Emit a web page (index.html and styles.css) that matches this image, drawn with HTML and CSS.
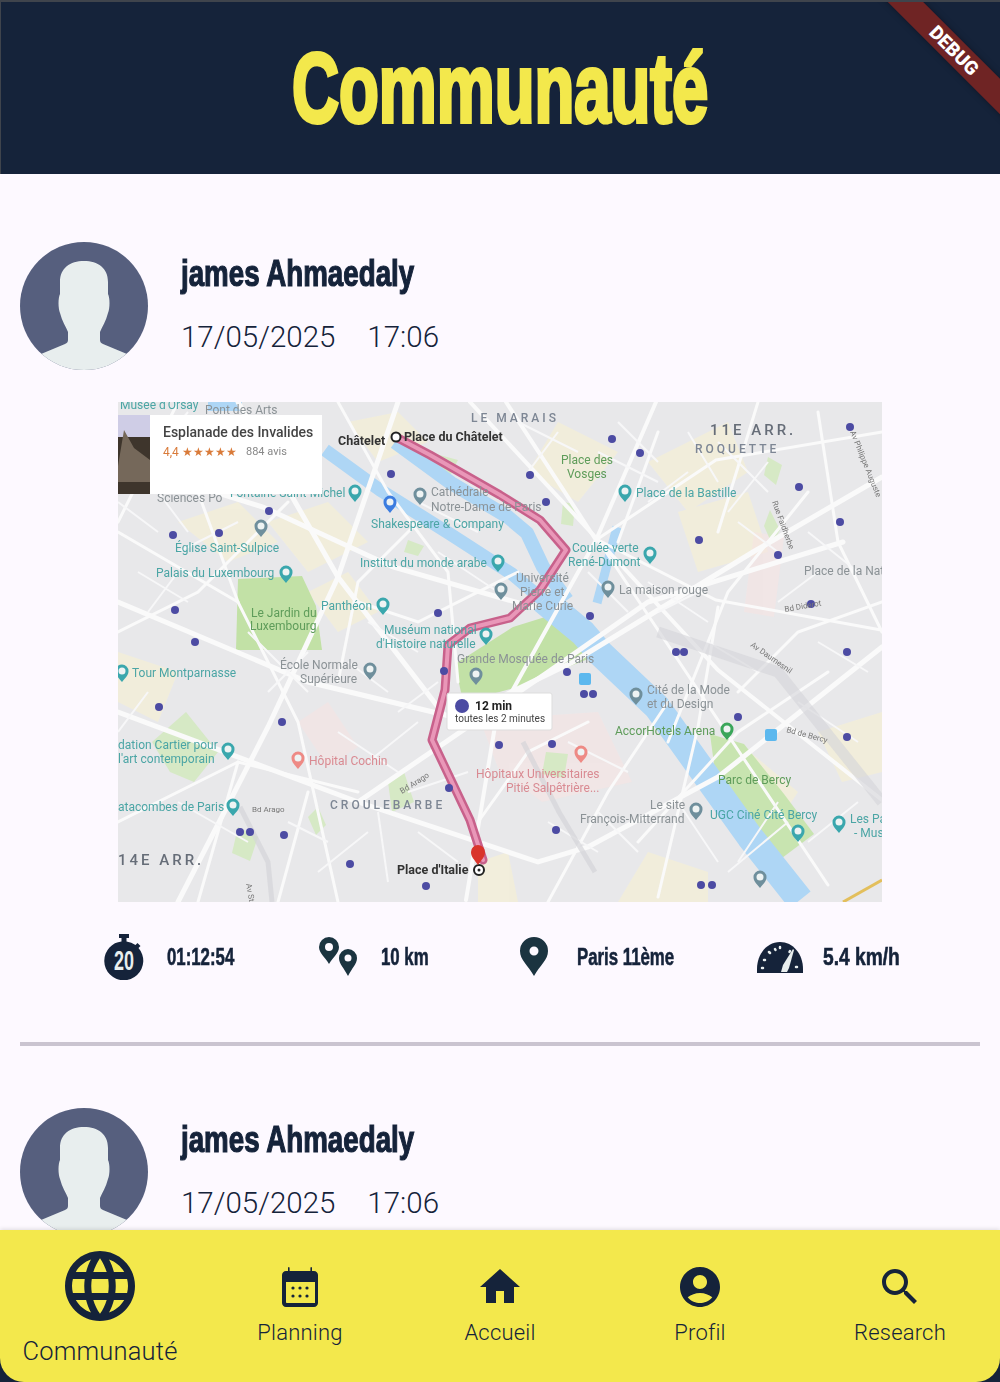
FILE: index.html
```html
<!DOCTYPE html>
<html lang="fr">
<head>
    <meta charset="UTF-8">
    <meta name="viewport" content="width=device-width, initial-scale=1.0">
    <title>Communauté</title>
    <link rel="stylesheet" href="styles.css">
</head>
<body>
    <svg class="defs">
        <defs>
            <g id="mapPin">
                <path d="M0 10c-4-5-6.500-7-6.500-11a6.500 6.500 0 0 1 13 0c0 4-2.500 6-6.500 11z"/>
                <circle cy="-1" r="3.500" fill="#eef3f3"/>
            </g>
            <symbol id="avatar" viewBox="0 0 128 128">
                <rect width="128" height="128" fill="#565f7e"/>
                <path fill="#e8eeee" d="M64 19C50 19 40 26 40 40v12c-2 4-2 14 0 19 2 8 6 14 8 19v8c0 2-1 3-3 4l-24 10-6 16h98l-6-16-24-10c-2-1-3-2-3-4v-8c2-5 6-11 8-19 2-5 2-15 0-19V40c0-14-10-21-24-21z"/>
            </symbol>
        </defs>
    </svg>

    <div class="screen">
        <header class="app-bar">
            <h1>Communauté</h1>
            <div class="debug-banner">DEBUG</div>
        </header>

        <main class="feed">
            <article class="post">
                <div class="post-head">
                    <svg class="avatar"><use href="#avatar"/></svg>
                    <div class="post-meta">
                        <div class="post-name">james Ahmaedaly</div>
                        <div class="post-date"><span>17/05/2025</span><span>17:06</span></div>
                    </div>
                </div>

                <svg class="map" viewBox="0 0 764 500">
                    <rect width="764" height="500" fill="#e8e8ea"/>

                    <!-- quartiers plus clairs -->
                    <g class="map-blocks" fill="#f8f1d2">
                        <path d="M60 120l60-20 40 40-50 20z"/>
                        <path d="M150 120l60-20 40 40-60 30z"/>
                        <path d="M230 20l50-10 30 30-50 20z"/>
                        <path d="M440 20l60 30-40 50-50-30z"/>
                        <path d="M530 60l80-40 20 50-60 40z"/>
                        <path d="M560 110l70-20 20 60-70 20z"/>
                        <path d="M0 250l60 20-20 50-40-20z"/>
                        <path d="M230 170l30 40-40 20-30-40z"/>
                        <path d="M620 340l60 50-20 30-60-40z"/>
                        <path d="M530 450l60 20v30h-90z"/>
                        <path d="M700 330l64-20v60l-40 10z"/>
                        <path d="M360 460l30-10 10 50h-40z"/>
                    </g>
                    <g class="map-blocks" fill="#f6e4e3">
                        <path d="M362 318l118-8 34 70-90 20-44-34z"/>
                        <path d="M180 320l30-20 30 45-30 20z"/>
                        <path d="M636 130l30 5-10 80-30-5z"/>
                    </g>

                    <!-- parcs -->
                    <path fill="#c2e1a6" d="M120 177l64-3 14 30 6 44H118z"/>
                    <path fill="#c2e1a6" d="M337 262l58-37 45-14 35 44-75 30-55 15z"/>
                    <path fill="#c8e4b0" d="M592 332l34 10 40 50 30 40-40 30-30-30-26-40z"/>
                    <g fill="#d6e9c5">
                        <path d="M34 340l34-30 32 40-24 30-24-10z"/>
                        <path d="M318 52l22 6-8 16-20-6z"/>
                        <path d="M290 138l16 6-6 10-14-4z"/>
                        <path d="M428 350l22 2-4 24-22-4z"/>
                        <path d="M652 108l10 20-8 14-8-18z"/>
                        <path d="M445 100l12 2-2 22-12-2z"/>
                        <path d="M650 55l14 8-6 20-12-10z"/>
                        <path d="M270 380l16-10 10 30-22 10z"/>
                        <path d="M120 425l20 10-8 24-18-8z"/>
                        <path d="M200 405l8 18-10 10-8-18z"/>
                    </g>

                    <!-- Seine et canal -->
                    <g fill="none" stroke="#aed6f5" stroke-linejoin="round">
                        <path stroke-width="18" d="M90 0h34"/>
                        <path stroke-width="13" d="M207 48l55 40 70 44 62 40 31 26"/>
                        <path stroke-width="14" d="M277 40l56 41 57 34 19 16 16 34 24 33"/>
                        <path stroke-width="27" d="M425 198l40 33 17 20 57 54 50 70 43 60 50 63"/>
                        <path stroke-width="9" d="M499 125l-20 76"/>
                    </g>

                    <!-- routes -->
                    <g fill="none" stroke="#fafafa" stroke-width="3" stroke-linecap="round">
                        <path stroke-width="5" d="M0 60l145 45 130 60 140 40"/>
                        <path stroke-width="5" d="M280 0l-60 175-70 150-90 175"/>
                        <path stroke-width="5" d="M0 200l190 80 150 36 115-56 180-110 129-75"/>
                        <path stroke-width="5" d="M240 400l190-130 100-70 195-60"/>
                        <path stroke-width="5" d="M120 0l100 175 100 130"/>
                        <path stroke-width="5" d="M0 310l240 90 180 60 50-15 130-70 164-130"/>
                        <path stroke-width="4" d="M478 138l-90-138"/>
                        <path stroke-width="4" d="M352 0l128 138 120 130 164 130"/>
                        <path stroke-width="4" d="M478 138l60-138"/>
                        <path stroke-width="4" d="M478 138l-50 90-50 90-30 180"/>
                        <path d="M478 138l120-80 166-28"/>
                        <path d="M480 138l118 60 165 30"/>
                        <path d="M480 138l110 165 120 180"/>
                        <path d="M600 205l-20 120-40 170"/>
                        <path d="M690 90l-80 100-60 150"/>
                        <path d="M60 0L0 120"/>
                        <path d="M0 130l120 70 60 120 40 180"/>
                        <path d="M220 0l50 90 60 80 10 110"/>
                        <path d="M170 100l-90 90-80 40"/>
                        <path d="M80 90l40 110"/>
                        <path d="M300 120l-60 60-20 100"/>
                        <path d="M0 420l120-60 120 30"/>
                        <path d="M80 500l40-140"/>
                        <path d="M160 500l30-110"/>
                        <path d="M400 170l-100 50-60-20"/>
                        <path d="M540 30l-40 110"/>
                        <path d="M640 0l-40 130"/>
                        <path d="M700 10l20 130 44 90"/>
                        <path d="M620 290l60-60 84-30"/>
                        <path d="M520 440l100-110 90-60"/>
                        <path d="M430 500l60-110 60-90"/>
                        <path d="M360 420l50-70 60-30"/>
                    </g>
                    <g fill="none" stroke="#f7f7f8" stroke-width="2">
                        <path d="M20 20l80 70M70 10L20 70M160 20l40 70M300 100l60 30M320 150l60 40M130 230l60 60M190 250l-40 40M30 290L0 330M60 400l70 40M220 330l60 40M290 390l60-20M530 180l60 40M600 40l50 50M650 60l-40 50M680 300l60 40M700 240l50 30M560 400l40 60M660 400l-40 60M60 150l60-30M480 50l60 30M530 100l40-30M260 410l10 70M430 420l50 30"/>
                        <path d="M100 20l30 50M130 60l50-30M40 90l30 40M0 100l40 30M20 170l50 30M60 170l-30 40M230 260l40 30M250 220l50 30M280 310l40-30M170 420l40 20M200 470l50-40M250 360l50-40M300 430l40 30M480 410l40 40M450 340l60 30M500 20l40 40M570 30l30 50M620 120l40 30M540 210l40-20M590 240l50 30M690 130l50 40M700 170l-40 30M690 440l50-40M610 470l60-50M470 170l40 40M400 20l60 30M440 30l-30 40"/>
                    </g>
                    <path fill="none" stroke="#d4d4d9" stroke-width="11" opacity=".6" d="M540 230l120 40 104 130"/>
                    <path fill="none" stroke="#d4d4d9" stroke-width="5" opacity=".7" d="M405 340l36 70 36 60M122 405l28 55 4 40"/>
                    <path fill="none" stroke="#e3bf5c" stroke-width="3" d="M725 500l39-22"/>

                    <!-- itinéraire -->
                    <g fill="none" stroke-linejoin="round" stroke-linecap="round">
                        <path stroke="#c8618b" stroke-width="9" d="M278 35l34 18 70 40 40 25 26 30-26 40-30 28-40 10-22 17-3 45-13 50 38 80 13 40"/>
                        <path stroke="#e997b8" stroke-width="4" d="M278 35l34 18 70 40 40 25 26 30-26 40-30 28-40 10-22 17-3 45-13 50 38 80 13 40"/>
                    </g>

                    <!-- arrêts de métro -->
                    <g fill="#4c4ba3">
                        <circle cx="273" cy="72" r="4"/><circle cx="151" cy="109" r="4"/><circle cx="55" cy="133" r="4"/><circle cx="101" cy="131" r="4"/>
                        <circle cx="57" cy="208" r="4"/><circle cx="77" cy="240" r="4"/><circle cx="320" cy="211" r="4"/>
                        <circle cx="494" cy="37" r="4"/><circle cx="522" cy="51" r="4"/><circle cx="412" cy="73" r="4"/><circle cx="732" cy="25" r="4"/>
                        <circle cx="681" cy="85" r="4"/><circle cx="722" cy="120" r="4"/><circle cx="581" cy="138" r="4"/><circle cx="660" cy="153" r="4"/>
                        <circle cx="693" cy="202" r="4"/><circle cx="428" cy="100" r="4"/><circle cx="472" cy="214" r="4"/><circle cx="729" cy="250" r="4"/>
                        <circle cx="41" cy="305" r="4"/><circle cx="164" cy="320" r="4"/><circle cx="326" cy="269" r="4"/><circle cx="449" cy="270" r="4"/>
                        <circle cx="620" cy="315" r="4"/><circle cx="729" cy="335" r="4"/><circle cx="331" cy="386" r="4"/>
                        <circle cx="166" cy="433" r="4"/><circle cx="232" cy="462" r="4"/><circle cx="308" cy="484" r="4"/><circle cx="438" cy="428" r="4"/>
                        <circle cx="434" cy="342" r="4"/><circle cx="381" cy="343" r="4"/><circle cx="558" cy="250" r="4"/><circle cx="566" cy="250" r="4"/>
                        <circle cx="466" cy="292" r="4"/><circle cx="475" cy="292" r="4"/><circle cx="594" cy="483" r="4"/><circle cx="583" cy="483" r="4"/>
                        <circle cx="122" cy="430" r="4"/><circle cx="132" cy="430" r="4"/>
                    </g>

                    <!-- épingles -->
                    <g fill="#3aa7ad">
                        <use href="#mapPin" x="237" y="90"/>
                        <use href="#mapPin" x="507" y="90"/>
                        <use href="#mapPin" x="532" y="152"/>
                        <use href="#mapPin" x="380" y="160"/>
                        <use href="#mapPin" x="168" y="171"/>
                        <use href="#mapPin" x="265" y="203"/>
                        <use href="#mapPin" x="368" y="233"/>
                        <use href="#mapPin" x="4" y="270"/>
                        <use href="#mapPin" x="110" y="348"/>
                        <use href="#mapPin" x="115" y="404"/>
                        <use href="#mapPin" x="680" y="430"/>
                        <use href="#mapPin" x="721" y="421"/>
                    </g>
                    <g fill="#6f8f9c">
                        <use href="#mapPin" x="143" y="125"/>
                        <use href="#mapPin" x="302" y="93"/>
                        <use href="#mapPin" x="252" y="268"/>
                        <use href="#mapPin" x="358" y="273"/>
                        <use href="#mapPin" x="383" y="188"/>
                        <use href="#mapPin" x="490" y="186"/>
                        <use href="#mapPin" x="518" y="293"/>
                        <use href="#mapPin" x="578" y="408"/>
                        <use href="#mapPin" x="642" y="476"/>
                    </g>
                    <use href="#mapPin" x="272" y="101" fill="#3c7de0"/>
                    <use href="#mapPin" x="180" y="357" fill="#ee8a85"/>
                    <use href="#mapPin" x="463" y="351" fill="#ee8a85"/>
                    <use href="#mapPin" x="609" y="328" fill="#3aa65a"/>
                    <rect x="461" y="271" width="12" height="12" rx="2" fill="#5cb8ee"/>
                    <rect x="647" y="327" width="12" height="12" rx="2" fill="#5cb8ee"/>

                    <!-- libellés -->
                    <g class="lbl-teal">
                        <text x="2" y="7">Musée d'Orsay</text>
                        <text x="112" y="95">Fontaine Saint-Michel</text>
                        <text x="253" y="126">Shakespeare &amp; Company</text>
                        <text x="242" y="165">Institut du monde arabe</text>
                        <text x="57" y="150">Église Saint-Sulpice</text>
                        <text x="38" y="175">Palais du Luxembourg</text>
                        <text x="203" y="208">Panthéon</text>
                        <text x="14" y="275">Tour Montparnasse</text>
                        <text x="266" y="232">Muséum national</text>
                        <text x="258" y="246">d'Histoire naturelle</text>
                        <text x="0" y="347">dation Cartier pour</text>
                        <text x="0" y="361">l'art contemporain</text>
                        <text x="0" y="409">atacombes de Paris</text>
                        <text x="518" y="95">Place de la Bastille</text>
                        <text x="454" y="150">Coulée verte</text>
                        <text x="450" y="164">René-Dumont</text>
                        <text x="592" y="417">UGC Ciné Cité Bercy</text>
                        <text x="732" y="421">Les Pa</text>
                        <text x="736" y="435">- Muse</text>
                    </g>
                    <g class="lbl-grey">
                        <text x="87" y="12">Pont des Arts</text>
                        <text x="39" y="100">Sciences Po</text>
                        <text x="313" y="94">Cathédrale</text>
                        <text x="313" y="109">Notre-Dame de Paris</text>
                        <text x="398" y="180">Université</text>
                        <text x="402" y="194">Pierre et</text>
                        <text x="394" y="208">Marie Curie</text>
                        <text x="501" y="192">La maison rouge</text>
                        <text x="686" y="173">Place de la Nat</text>
                        <text x="162" y="267">École Normale</text>
                        <text x="182" y="281">Supérieure</text>
                        <text x="339" y="261">Grande Mosquée de Paris</text>
                        <text x="529" y="292">Cité de la Mode</text>
                        <text x="529" y="306">et du Design</text>
                        <text x="532" y="407">Le site</text>
                        <text x="462" y="421">François-Mitterrand</text>
                    </g>
                    <g class="lbl-green">
                        <text x="443" y="62">Place des</text>
                        <text x="449" y="76">Vosges</text>
                        <text x="133" y="215">Le Jardin du</text>
                        <text x="132" y="228">Luxembourg</text>
                        <text x="497" y="333">AccorHotels Arena</text>
                        <text x="600" y="382">Parc de Bercy</text>
                    </g>
                    <g class="lbl-red">
                        <text x="191" y="363">Hôpital Cochin</text>
                        <text x="358" y="376">Hôpitaux Universitaires</text>
                        <text x="388" y="390">Pitié Salpêtrière...</text>
                    </g>
                    <g class="lbl-quarter">
                        <text x="353" y="20">LE MARAIS</text>
                        <text x="592" y="33" class="lbl-arr">11E ARR.</text>
                        <text x="577" y="51">ROQUETTE</text>
                        <text x="212" y="407">CROULEBARBE</text>
                        <text x="0" y="463" class="lbl-arr">14E ARR.</text>
                    </g>
                    <g class="lbl-street">
                        <text x="134" y="410">Bd Arago</text>
                        <text transform="translate(284 392) rotate(-32)">Bd Arago</text>
                        <text transform="translate(667 210) rotate(-10)">Bd Diderot</text>
                        <text transform="translate(632 244) rotate(35)">Av Daumesnil</text>
                        <text transform="translate(668 330) rotate(15)">Bd de Bercy</text>
                        <text transform="translate(654 100) rotate(70)">Rue Faidherbe</text>
                        <text transform="translate(732 30) rotate(68)">Av Philippe Auguste</text>
                        <text transform="translate(128 482) rotate(80)">Av Stephen</text>
                    </g>
                    <g class="lbl-dark">
                        <text x="220" y="43">Châtelet</text>
                        <text x="286" y="39">Place du Châtelet</text>
                        <text x="279" y="472">Place d'Italie</text>
                    </g>

                    <circle cx="278" cy="35" r="4.500" fill="#fff" stroke="#222" stroke-width="2"/>
                    <circle cx="361" cy="468" r="5" fill="#fff" stroke="#222" stroke-width="2"/>
                    <circle cx="361" cy="468" r="1.500" fill="#222"/>
                    <path fill="#d9342b" d="M360 463c-4-6-7-8-7-13a7 7 0 0 1 14 0c0 5-3 7-7 13z"/>

                    <!-- encarts -->
                    <rect x="32" y="13" width="172" height="79" fill="#fff"/>
                    <rect y="13" width="32" height="79" fill="#3e352c"/>
                    <rect y="13" width="32" height="22" fill="#cfcde6"/>
                    <path fill="#75685a" d="M0 64l6-36 10 18 16 12v22H0z"/>
                    <text x="45" y="35" class="card-title">Esplanade des Invalides</text>
                    <text x="45" y="54" class="card-rate">4,4 ★★★★★</text>
                    <text x="128" y="53" class="card-avis">884 avis</text>

                    <rect x="329" y="291" width="105" height="37" rx="2" fill="#fff" stroke="#ddd"/>
                    <circle cx="344" cy="304" r="7" fill="#4c4ba3"/>
                    <text x="357" y="308" class="bubble-time">12 min</text>
                    <text x="337" y="320" class="bubble-sub">toutes les 2 minutes</text>
                </svg>

                <div class="stats">
                    <div class="stat">
                        <svg class="stat-icon" viewBox="0 0 50 46">
                            <path fill="#15233a" d="M20 0h10v4h-2.500v3.500a19 19 0 0 1 9 3.500l2-2 3 3-2 2a19.500 19.500 0 1 1-29-.5A19 19 0 0 1 22.500 7.500V4H20z"/>
                            <text x="25" y="36" class="stopwatch-num" textLength="20" lengthAdjust="spacingAndGlyphs">20</text>
                        </svg>
                        <span class="stat-text">01:12:54</span>
                    </div>
                    <div class="stat">
                        <svg class="stat-icon" viewBox="0 0 50 46">
                            <path fill="#1b3440" fill-rule="evenodd" d="M16 3a10 10 0 0 1 10 10c0 6-6 10-10 17C12 23 6 19 6 13A10 10 0 0 1 16 3zm0 6a4 4 0 1 0 0 8 4 4 0 0 0 0-8z"/>
                            <path fill="#1b3440" fill-rule="evenodd" d="M35 15a9 9 0 0 1 9 9c0 6-5 10-9 18-4-8-9-12-9-18a9 9 0 0 1 9-9zm0 5.500a3.500 3.500 0 1 0 0 7 3.500 3.500 0 0 0 0-7z"/>
                        </svg>
                        <span class="stat-text">10 km</span>
                    </div>
                    <div class="stat">
                        <svg class="stat-icon" viewBox="0 0 50 46">
                            <path fill="#1b3440" fill-rule="evenodd" d="M25 3a14 14 0 0 1 14 14c0 9-8 14-14 25-6-11-14-16-14-25A14 14 0 0 1 25 3zm0 9.500a4.500 4.500 0 1 0 0 9 4.500 4.500 0 0 0 0-9z"/>
                        </svg>
                        <span class="stat-text">Paris 11ème</span>
                    </div>
                    <div class="stat">
                        <svg class="stat-icon" viewBox="0 0 50 46">
                            <path fill="#15233a" d="M2 39V35C2 20 12 8 25 8s23 12 23 27v4z"/>
                            <path fill="none" stroke="#e8eeee" stroke-width="2.500" stroke-linecap="round" d="M7 34h1M9 26h1M14 18l1 1M25 13v1M20 15l.5 1M35 17l-.5 1M41 33h1"/>
                            <path fill="#e8eeee" d="M26 38l2-7 10-16 1 1-5 18-2 4z"/>
                        </svg>
                        <span class="stat-text">5.4 km/h</span>
                    </div>
                </div>
            </article>

            <hr class="divider">

            <article class="post">
                <div class="post-head">
                    <svg class="avatar"><use href="#avatar"/></svg>
                    <div class="post-meta">
                        <div class="post-name">james Ahmaedaly</div>
                        <div class="post-date"><span>17/05/2025</span><span>17:06</span></div>
                    </div>
                </div>
            </article>
        </main>

        <nav class="bottom-nav">
            <a class="nav-item active">
                <svg viewBox="0 0 24 24"><path d="M11.990 2C6.470 2 2 6.480 2 12s4.470 10 9.990 10C17.520 22 22 17.520 22 12S17.520 2 11.990 2zm6.930 6h-2.950c-.32-1.250-.78-2.450-1.380-3.560 1.840.63 3.370 1.910 4.330 3.560zM12 4.040c.83 1.200 1.480 2.530 1.910 3.960h-3.820c.43-1.430 1.080-2.760 1.910-3.960zM4.260 14C4.100 13.360 4 12.690 4 12s.1-1.360.26-2h3.380c-.08.66-.14 1.320-.14 2 0 .68.06 1.340.14 2H4.260zm.82 2h2.950c.32 1.250.78 2.450 1.380 3.560-1.840-.63-3.370-1.900-4.330-3.560zm2.950-8H5.080c.96-1.660 2.490-2.930 4.330-3.560C8.810 5.550 8.350 6.750 8.030 8zM12 19.960c-.83-1.200-1.480-2.530-1.910-3.960h3.820c-.43 1.430-1.080 2.760-1.910 3.960zM14.340 14H9.660c-.09-.66-.16-1.320-.16-2 0-.68.07-1.350.16-2h4.680c.09.650.16 1.320.16 2 0 .68-.07 1.340-.16 2zm.25 5.560c.6-1.110 1.060-2.310 1.380-3.560h2.950c-.96 1.650-2.490 2.930-4.330 3.560zM16.360 14c.08-.66.14-1.320.14-2 0-.68-.06-1.340-.14-2h3.380c.16.640.26 1.310.26 2s-.1 1.360-.26 2h-3.380z"/></svg>
                <span>Communauté</span>
            </a>
            <a class="nav-item">
                <svg viewBox="0 0 24 24"><path fill-rule="evenodd" d="M19 4h-1V2.500c0-.6-.8-.6-.8 0V4H6.800V2.500c0-.6-.8-.6-.8 0V4H5c-1.100 0-2 .9-2 2v14c0 1.100.9 2 2 2h14c1.100 0 2-.9 2-2V6c0-1.100-.9-2-2-2zm.5 16H5.500c-.3 0-.5-.2-.5-.5V9.500h14.500z"/><circle cx="8.500" cy="12.500" r=".8"/><circle cx="12" cy="12.500" r=".8"/><circle cx="15.500" cy="12.500" r=".8"/><circle cx="8.500" cy="16.500" r=".8"/><circle cx="12" cy="16.500" r=".8"/><circle cx="15.500" cy="16.500" r=".8"/></svg>
                <span>Planning</span>
            </a>
            <a class="nav-item">
                <svg viewBox="0 0 24 24"><path d="M10 20v-6h4v6h5v-8h3L12 3 2 12h3v8z"/></svg>
                <span>Accueil</span>
            </a>
            <a class="nav-item">
                <svg viewBox="0 0 24 24"><path d="M12 2C6.480 2 2 6.480 2 12s4.480 10 10 10 10-4.480 10-10S17.520 2 12 2zm0 4c1.930 0 3.500 1.570 3.500 3.500S13.930 13 12 13s-3.500-1.570-3.500-3.500S10.070 6 12 6zm0 14c-2.030 0-4.430-.82-6.140-2.880C7.550 15.800 9.680 15 12 15s4.450.8 6.140 2.120C16.430 19.180 14.030 20 12 20z"/></svg>
                <span>Profil</span>
            </a>
            <a class="nav-item">
                <svg viewBox="0 0 24 24"><path d="M15.500 14h-.79l-.28-.27C15.410 12.590 16 11.110 16 9.500 16 5.910 13.090 3 9.500 3S3 5.910 3 9.500 5.910 16 9.500 16c1.610 0 3.090-.59 4.230-1.570l.27.280v.79l5 4.990L20.490 19l-4.990-5zm-6 0C7.010 14 5 11.990 5 9.500S7.010 5 9.500 5 14 7.010 14 9.500 11.990 14 9.500 14z"/></svg>
                <span>Research</span>
            </a>
        </nav>
    </div>
</body>
</html>
```

FILE: styles.css
```css
* {
    margin: 0;
    padding: 0;
    box-sizing: border-box;
}

body {
    background: #15233a;
    font-family: Roboto, "Liberation Sans", sans-serif;
    color: #15233a;
}

.defs {
    display: none;
}

.screen {
    display: flex;
    flex-direction: column;
    width: 1000px;
    height: 1382px;
    overflow: hidden;
}

/* barre du haut */
.app-bar {
    position: relative;
    flex: none;
    display: flex;
    justify-content: center;
    align-items: center;
    height: 174px;
    overflow: hidden;
    background: #15233a;
    border-top: 2px solid #3f444c;
    border-left: 1px solid #3f444c;
}

.app-bar h1 {
    font-family: "Liberation Sans", sans-serif;
    font-size: 98px;
    font-weight: 700;
    line-height: 1;
    color: #f3e84c;
    -webkit-text-stroke: 4px #f3e84c;
    transform: scaleX(.665);
}

.debug-banner {
    position: absolute;
    top: 36px;
    left: 853px;
    width: 200px;
    height: 25px;
    background: #6f2424;
    box-shadow: 0 0 6px rgba(0, 0, 0, .35);
    color: #fff;
    font-size: 19px;
    font-weight: 900;
    line-height: 25px;
    text-align: center;
    transform: rotate(45deg);
}

/* liste */
.feed {
    flex: 1;
    min-height: 0;
    overflow: hidden;
    padding-top: 6px;
    background: #fdf9ff;
}

.post {
    padding: 62px 20px 0;
}

.post-head {
    display: flex;
    gap: 33px;
    height: 128px;
}

.avatar {
    flex: none;
    width: 128px;
    height: 128px;
    border-radius: 50%;
}

.post-meta {
    padding-top: 10px;
}

.post-name {
    height: 44px;
    font-family: "Liberation Sans", sans-serif;
    font-size: 36px;
    font-weight: 700;
    line-height: 44px;
    -webkit-text-stroke: 1.200px #15233a;
    white-space: nowrap;
    transform: scaleX(.77);
    transform-origin: left center;
}

.post-date {
    display: flex;
    gap: 32px;
    margin-top: 23px;
    font-size: 29.500px;
    font-weight: 300;
    line-height: 36px;
}

.map {
    display: block;
    width: 764px;
    height: 500px;
    margin: 32px auto 0;
    filter: blur(.7px);
}

.map text {
    font-family: Roboto, sans-serif;
    font-size: 12px;
}

.map-blocks {
    opacity: .6;
}

.lbl-teal text {
    fill: #4ba5a5;
}

.lbl-grey text {
    fill: #8b9296;
}

.lbl-green text {
    fill: #5e9c5a;
}

.lbl-red text {
    fill: #d98a92;
}

.map .lbl-quarter text {
    fill: #7d8694;
    font-size: 12px;
    font-weight: 500;
    letter-spacing: 3px;
}

.map .lbl-quarter .lbl-arr {
    font-size: 15px;
    fill: #666d78;
}

.map .lbl-street text {
    fill: #777;
    font-size: 8px;
}

.map .lbl-dark text {
    fill: #333;
    font-size: 12.500px;
    font-weight: 700;
}

.map .card-title {
    fill: #444;
    font-size: 14px;
    font-weight: 500;
}

.map .card-rate {
    fill: #d97b3a;
    font-size: 12px;
}

.map .card-avis {
    fill: #888;
    font-size: 11px;
}

.map .bubble-time {
    fill: #222;
    font-size: 12px;
    font-weight: 700;
}

.map .bubble-sub {
    fill: #444;
    font-size: 10px;
}

.stats {
    display: grid;
    grid-template-columns: 134px 116px 166px 146px;
    justify-content: center;
    column-gap: 80px;
    margin-top: 32px;
    height: 46px;
}

.stat {
    display: flex;
    align-items: center;
    gap: 18px;
}

.stat-icon {
    flex: none;
    width: 50px;
    height: 46px;
}

.stat-text {
    font-family: "Liberation Sans", sans-serif;
    font-size: 24px;
    font-weight: 700;
    -webkit-text-stroke: .6px #15233a;
    white-space: nowrap;
    transform: scaleX(.7);
    transform-origin: left center;
}

.stat:last-child .stat-text {
    transform: scaleX(.8);
}

.stopwatch-num {
    fill: #e8eeee;
    font-family: "Liberation Sans", sans-serif;
    font-size: 27px;
    font-weight: 700;
    text-anchor: middle;
}

.divider {
    height: 4px;
    margin: 62px 20px 0;
    border: 0;
    background: #cac4d0;
}

/* navigation du bas */
.bottom-nav {
    flex: none;
    display: flex;
    align-items: center;
    height: 152px;
    background: #f3e84c;
    border-radius: 0 0 24px 24px;
    box-shadow: 0 -1px 4px rgba(0, 0, 0, .12);
}

.nav-item {
    flex: 1;
    display: flex;
    flex-direction: column;
    align-items: center;
    font-size: 22px;
    font-weight: 300;
    line-height: 34px;
    letter-spacing: .2px;
}

.nav-item span {
    margin-top: 5px;
}

.nav-item svg {
    width: 48px;
    height: 48px;
    fill: #15233a;
}

.nav-item.active {
    font-size: 25.500px;
    line-height: 36px;
}

.nav-item.active svg {
    width: 84px;
    height: 84px;
}
```
